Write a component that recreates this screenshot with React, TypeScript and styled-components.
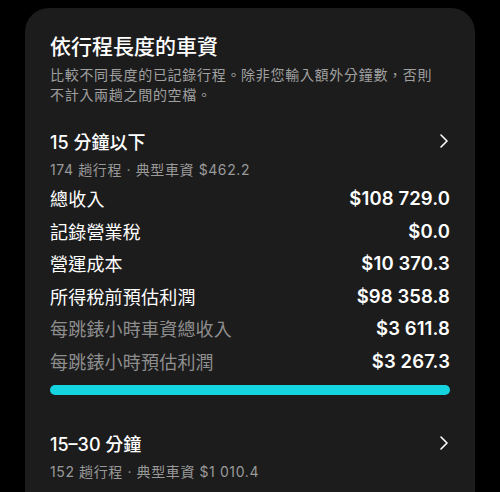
import styled, { createGlobalStyle } from "styled-components";

const GlobalStyle = createGlobalStyle`
    html, body {
        margin: 0;
        padding: 0;
        background: #000000;
    }
    body {
        font-family: "Noto Sans CJK TC", "Liberation Sans", sans-serif;
        color: #FFFFFF;
    }
`;

const Page = styled.div`
    width: 500px;
    height: 492px;
    overflow: hidden;
    padding: 8px 25px 0;
    box-sizing: border-box;
`;

const Card = styled.div`
    background-color: #1c1c1c;
    border-radius: 24px 24px 0 0;
    padding: 22px 25px 30px;
    min-height: 520px;
`;

const Title = styled.h2`
    margin: 0;
    font-size: 21px;
    font-weight: 500;
    line-height: 30px;
    color: #FFFFFF;
`;

const Description = styled.p`
    margin: 4px 0 0;
    max-width: 390px;
    font-size: 14px;
    letter-spacing: 0.7px;
    line-height: 20px;
    color: #a0a0a0;
`;

const Section = styled.div`
    margin-top: 23px;

    & + & {
        margin-top: 34px;
    }
`;

const SectionHead = styled.div`
    display: flex;
    align-items: center;
    justify-content: space-between;
    height: 28px;
`;

const SectionTitle = styled.div`
    font-family: "Inter", "Noto Sans CJK TC", sans-serif;
    font-size: 18px;
    font-weight: 500;
    color: #FFFFFF;
`;

const Meta = styled.div`
    margin-top: 3px;
    font-family: "Inter", "Noto Sans CJK TC", sans-serif;
    font-size: 14px;
    letter-spacing: 0.6px;
    line-height: 24px;
    color: #999999;
`;

const Row = styled.div<{ $muted?: boolean }>`
    display: flex;
    align-items: center;
    justify-content: space-between;
    height: 32.5px;
    font-size: 18px;
    letter-spacing: 0.2px;
    color: ${p => p.$muted ? "#8e8e8e" : "#FFFFFF"};
`;

const Value = styled.span`
    font-family: "Inter", "Liberation Sans", sans-serif;
    font-weight: 600;
    font-size: 18.5px;
    letter-spacing: 0.1px;
    color: #FFFFFF;
`;

const Bar = styled.div`
    margin-top: 8px;
    height: 10px;
    border-radius: 5px;
    background-color: #14d4e0;
`;

const Chevron = () => (
    <svg width="12" height="16" viewBox="0 0 12 16">
        <path d="M3 2 L9 8 L3 14" fill="none" stroke="#FFFFFF" strokeWidth="1.6" strokeLinecap="round" strokeLinejoin="round" />
    </svg>
);

const rows = [
    { label: "總收入", value: "$108 729.0" },
    { label: "記錄營業稅", value: "$0.0" },
    { label: "營運成本", value: "$10 370.3" },
    { label: "所得稅前預估利潤", value: "$98 358.8" },
    { label: "每跳錶小時車資總收入", value: "$3 611.8", muted: true },
    { label: "每跳錶小時預估利潤", value: "$3 267.3", muted: true },
];

const App = () => {
    return (
        <Page>
            <GlobalStyle />
            <Card>
                <Title>依行程長度的車資</Title>
                <Description>
                    比較不同長度的已記錄行程。除非您輸入額外分鐘數，否則不計入兩趟之間的空檔。
                </Description>

                <Section>
                    <SectionHead>
                        <SectionTitle>15 分鐘以下</SectionTitle>
                        <Chevron />
                    </SectionHead>
                    <Meta>174 趟行程 · 典型車資 $462.2</Meta>
                    {rows.map(r => (
                        <Row key={r.label} $muted={r.muted}>
                            <span>{r.label}</span>
                            <Value>{r.value}</Value>
                        </Row>
                    ))}
                    <Bar />
                </Section>

                <Section>
                    <SectionHead>
                        <SectionTitle>15–30 分鐘</SectionTitle>
                        <Chevron />
                    </SectionHead>
                    <Meta>152 趟行程 · 典型車資 $1 010.4</Meta>
                </Section>
            </Card>
        </Page>
    );
};

export default App;
